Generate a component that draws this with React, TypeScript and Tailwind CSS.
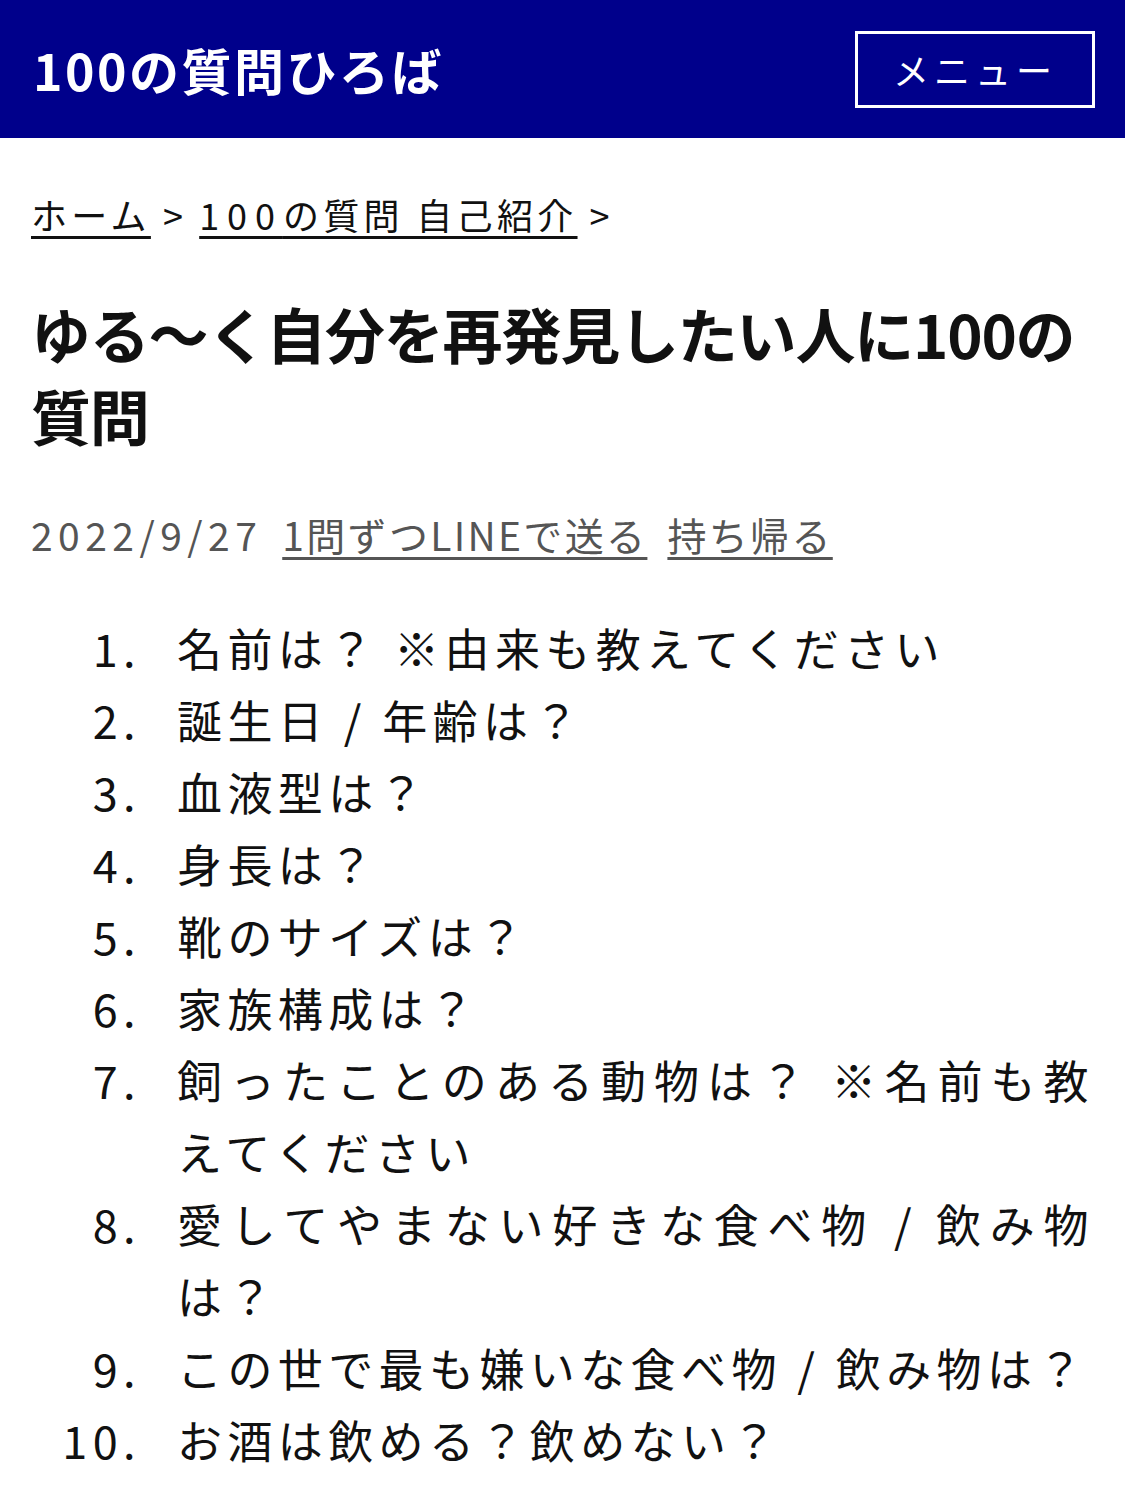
const questions = [
  '名前は？ ※由来も教えてください',
  '誕生日 / 年齢は？',
  '血液型は？',
  '身長は？',
  '靴のサイズは？',
  '家族構成は？',
  '飼ったことのある動物は？ ※名前も教えてください',
  '愛してやまない好きな食べ物 / 飲み物は？',
  'この世で最も嫌いな食べ物 / 飲み物は？',
  'お酒は飲める？飲めない？',
];

const font = { fontFamily: '"Noto Sans CJK JP", "Noto Sans", sans-serif' };

export default function App() {
  return (
    <div className="min-h-screen w-full bg-white text-[#111]" style={font}>
      {/* Header */}
      <header className="flex h-[138px] items-center justify-between bg-[#00008b] pl-[33px] pr-[30px]">
        <h2 className="text-[50px] font-bold leading-none tracking-[0.05em] text-white">100の質問ひろば</h2>
        <button className="flex h-[77px] w-[240px] items-center justify-center border-[3px] border-white text-[36px] tracking-[0.14em] text-white">
          メニュー
        </button>
      </header>

      <main className="px-[31px]">
        {/* Breadcrumb */}
        <nav className="mt-[49px] flex items-center text-[36px] leading-[54px] tracking-[0.12em]">
          <a href="#" className="underline decoration-[3px] underline-offset-[6px]">ホーム</a>
          <span className="mx-[12px]">&gt;</span>
          <a href="#" className="underline decoration-[3px] underline-offset-[6px]">
            <span className="tracking-[0.22em]">100</span>の質問 自己紹介
          </a>
          <span className="mx-[12px]">&gt;</span>
        </nav>

        {/* Title */}
        <h1 className="mt-[51px] text-[60px] font-bold leading-[82px] tracking-[-0.02em]">
          ゆる〜く自分を再発見したい人に100の質問
        </h1>

        {/* Meta */}
        <div className="mt-[49px] flex items-center gap-[20px] text-[39px] leading-[58px] tracking-[0.06em] text-[#555]">
          <span className="tracking-[0.14em]">2022/9/27</span>
          <a href="#" className="underline decoration-[3px] underline-offset-[6px]">1問ずつLINEで送る</a>
          <a href="#" className="underline decoration-[3px] underline-offset-[6px]">持ち帰る</a>
        </div>

        {/* Questions */}
        <ol className="mt-[49px] flex flex-col text-[45px] leading-[72px] tracking-[0.12em]">
          {questions.map((q, i) => (
            <li key={i} className="flex">
              <span className="w-[146px] shrink-0 pr-[36px] text-right">{i + 1}.</span>
              <span className="flex-1 text-justify">{q}</span>
            </li>
          ))}
        </ol>
      </main>
    </div>
  );
}
